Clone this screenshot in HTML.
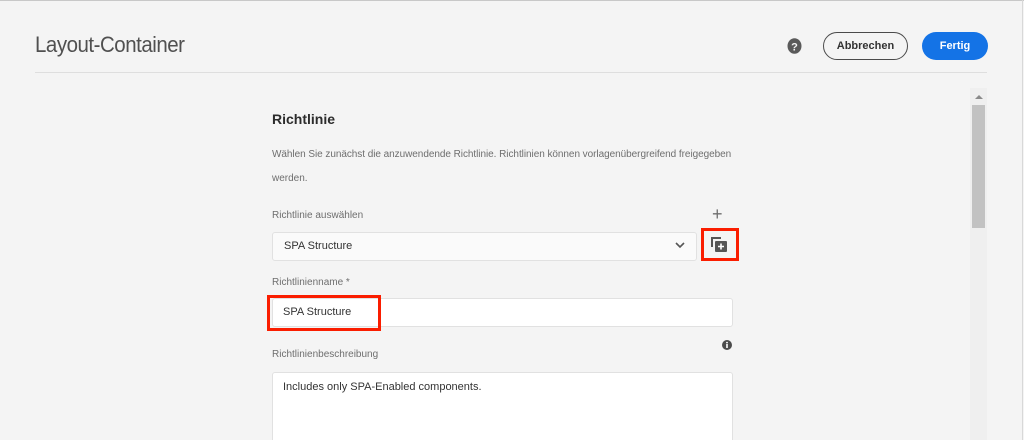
<!DOCTYPE html>
<html style="width:1024px;height:440px;overflow:hidden"><head><meta charset="utf-8"><style>
*{margin:0;padding:0;box-sizing:border-box}
body{width:1024px;height:440px;overflow:hidden;background:#f4f4f4;font-family:"Liberation Sans",sans-serif;position:relative;color:#4b4b4b}
.a{position:absolute;white-space:nowrap}
.btn{display:flex;align-items:center;justify-content:center;font-size:11px;font-weight:bold}
</style></head><body>
<div class="a" style="left:0;top:0;width:1024px;height:1px;background:#c8c8c8"></div>
<div class="a" style="right:1px;top:0;width:1px;height:440px;background:#d8d8d8"></div>
<div class="a" style="left:35px;top:32px;font-size:22px;color:#505050;letter-spacing:-0.5px;transform:scaleX(0.93);transform-origin:left">Layout-Container</div>
<svg class="a" style="left:787px;top:38px" width="15" height="16" viewBox="0 0 15 16"><ellipse cx="7.5" cy="8" rx="7" ry="7.8" fill="#5a5a5a"/><text x="7.5" y="12.3" font-size="11" font-weight="bold" text-anchor="middle" fill="#f4f4f4" font-family="Liberation Sans">?</text></svg>
<div class="a btn" style="left:823px;top:32px;width:85px;height:28px;border:1.5px solid #4b4b4b;border-radius:14px;color:#333">Abbrechen</div>
<div class="a btn" style="left:922px;top:32px;width:66px;height:28px;background:#1473e6;border-radius:14px;color:#fff">Fertig</div>
<div class="a" style="left:35px;top:72px;width:952px;height:1px;background:#dedede"></div>
<div class="a" style="left:970px;top:88px;width:17px;height:352px;background:#efefef"></div>
<div class="a" style="top:95px;width:0;height:0;border-left:4px solid transparent;border-right:4px solid transparent;border-bottom:4px solid #8a8a8a;left:975px"></div>
<div class="a" style="left:972px;top:105px;width:13px;height:123px;background:#c2c2c2"></div>
<div class="a" style="left:272px;top:111px;font-size:14px;font-weight:bold;color:#2c2c2c">Richtlinie</div>
<div class="a" style="left:272px;top:149px;font-size:10px;color:#6e6e6e;letter-spacing:-0.05px">Wählen Sie zunächst die anzuwendende Richtlinie. Richtlinien können vorlagenübergreifend freigegeben</div>
<div class="a" style="left:272px;top:173px;font-size:10px;color:#6e6e6e">werden.</div>
<div class="a" style="left:272px;top:210px;font-size:10px;color:#6e6e6e">Richtlinie auswählen</div>
<div class="a" style="left:712px;top:205px;font-size:18px;color:#6e6e6e;line-height:18px">+</div>
<div class="a" style="left:272px;top:232px;width:425px;height:29px;background:#fafafa;border:1px solid #e1e1e1;border-radius:3px;font-size:11px;line-height:27px;padding-left:11px;color:#333">SPA Structure</div>
<svg class="a" style="left:674px;top:241px" width="12" height="8" viewBox="0 0 12 8"><path d="M2 2 L6 6 L10 2" fill="none" stroke="#555" stroke-width="1.6"/></svg>
<div class="a" style="left:701px;top:228px;width:38px;height:33px;border:3px solid #fa1d00"></div>
<svg class="a" style="left:711px;top:237px" width="16" height="15" viewBox="0 0 16 15"><path d="M0 0h10v2H2v8H0z" fill="#555"/><rect x="4" y="4" width="12" height="11" rx="1" fill="#555"/><path d="M10 6.5v6M7 9.5h6" stroke="#fff" stroke-width="1.6"/></svg>
<div class="a" style="left:272px;top:277px;font-size:10px;color:#6e6e6e">Richtlinienname *</div>
<div class="a" style="left:272px;top:298px;width:461px;height:29px;background:#fff;border:1px solid #e1e1e1;border-radius:3px"></div>
<div class="a" style="left:267px;top:295px;width:114px;height:36px;border:3px solid #fa1d00"></div>
<div class="a" style="left:283px;top:306px;font-size:11px;color:#333">SPA Structure</div>
<div class="a" style="left:272px;top:349px;font-size:10px;color:#6e6e6e">Richtlinienbeschreibung</div>
<svg class="a" style="left:722px;top:340px" width="10" height="10" viewBox="0 0 10 10"><circle cx="5" cy="5" r="5" fill="#4b4b4b"/><rect x="4.2" y="4" width="1.6" height="4" fill="#fff"/><circle cx="5" cy="2.6" r="0.9" fill="#fff"/></svg>
<div class="a" style="left:272px;top:372px;width:461px;height:68px;background:#fff;border:1px solid #e1e1e1;border-bottom:none;border-radius:3px 3px 0 0"></div>
<div class="a" style="left:283px;top:381px;font-size:11px;color:#333">Includes only SPA-Enabled components.</div>
</body></html>
